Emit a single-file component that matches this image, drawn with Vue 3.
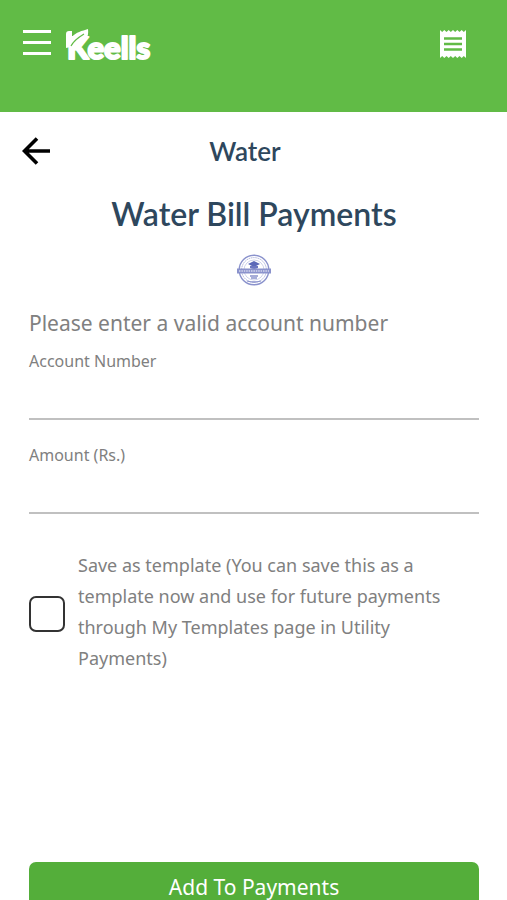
<template>
  <div class="page">
    <!-- Top bar -->
    <header class="topbar">
      <div class="topbar-left">
        <button class="icon-btn" type="button" aria-label="Menu">
          <svg width="28" height="26" viewBox="0 0 28 26" fill="#fff">
            <rect width="28" height="3" />
            <rect y="11" width="28" height="3" />
            <rect y="22" width="28" height="3" />
          </svg>
        </button>
        <a class="logo" href="#" aria-label="Keells">
          <svg width="96" height="40" viewBox="0 0 96 40">
            <text class="logo-text" x="1" y="31">Keells</text>
            <path
              d="M0 20V6q0-3 3-3h3v6C10 4 16 3 22 1C23 9 20 16 9 18z"
              fill="#fff"
            />
            <path d="M5 18C8 12 13 9 18 6" fill="none" stroke="#61bb46" stroke-width="1.200" />
          </svg>
        </a>
      </div>
      <button class="icon-btn" type="button" aria-label="Bills">
        <svg width="26" height="28" viewBox="0 0 26 28">
          <path
            d="M0 0l2.200 2 2.100-2 2.200 2 2.200-2 2.100 2L13 0l2.200 2 2.100-2 2.200 2 2.200-2 2.100 2L26 0v28l-2.200-2-2.100 2-2.200-2-2.200 2-2.100-2L13 28l-2.200-2-2.100 2-2.200-2-2.200 2-2.100-2L0 28z"
            fill="#fff"
          />
          <path d="M4 8.500h18M4 14h18M4 19.500h18" stroke="#61bb46" stroke-width="2.600" />
        </svg>
      </button>
    </header>

    <main class="content">
      <!-- Title row -->
      <div class="title-row">
        <button class="icon-btn back" type="button" aria-label="Back">
          <svg width="30" height="28" viewBox="0 0 30 28" fill="none" stroke="#000" stroke-width="3.600">
            <path d="M28 14H3M15 1.500L2.500 14L15 26.500" />
          </svg>
        </button>
        <h2>Water</h2>
      </div>

      <h1>Water Bill Payments</h1>

      <svg class="biller" width="36" height="32" viewBox="0 0 36 32" fill="none" stroke="#8a92cc">
        <circle cx="18" cy="16" r="14.800" stroke-width="1.400" />
        <circle cx="18" cy="16" r="12.400" stroke-width="1" stroke-dasharray="1.500 .7" opacity=".7" />
        <circle cx="18" cy="16" r="10" stroke-width=".7" opacity=".6" />
        <path d="M12 10l6-3 6 3-6 3z" fill="#5b68b8" stroke="none" />
        <path d="M14 12v2q4 2 8 0v-2" fill="#6b76c0" stroke="none" />
        <rect x="1" y="14.500" width="34" height="5" fill="#8a92cc" stroke="none" />
        <path d="M3 17h30" stroke="#d5d8ee" stroke-width="1.600" stroke-dasharray="1.500 .9" />
        <path d="M14 22h8M15 24h6M11 27q7 2 14 0" stroke-width="1.300" />
      </svg>

      <form class="form" @submit.prevent>
        <p class="hint">Please enter a valid account number</p>

        <div v-for="f in fields" :key="f.id" class="field">
          <label :for="f.id">{{ f.label }}</label>
          <input :id="f.id" v-model="f.value" type="text" inputmode="numeric" />
        </div>

        <div class="save">
          <input id="save-template" v-model="saveTemplate" type="checkbox" />
          <label for="save-template">
            Save as template (You can save this as a template now and use for future payments
            through My Templates page in Utility Payments)
          </label>
        </div>

        <button class="submit" type="submit">Add To Payments</button>
      </form>
    </main>
  </div>
</template>

<script setup>
import { ref } from 'vue'

const fields = ref([
  { id: 'account', label: 'Account Number', value: '' },
  { id: 'amount', label: 'Amount (Rs.)', value: '' },
])
const saveTemplate = ref(false)
</script>

<style>
body {
  margin: 0;
  background: #fff;
}
html,
body,
#app {
  height: 100%;
}
</style>

<style scoped>
.page {
  height: 100%;
  overflow: hidden;
  font-family: 'Noto Sans', 'Open Sans', sans-serif;
  color: #808080;
}

/* Top bar */
.topbar {
  display: flex;
  align-items: flex-start;
  justify-content: space-between;
  box-sizing: border-box;
  height: 112px;
  padding: 28px 41px 0 23px;
  background: #61bb46;
}
.topbar-left { display: flex; align-items: flex-start; gap: 15px; }
.icon-btn {
  display: block;
  padding: 2px 0;
  border: none;
  background: transparent;
  cursor: pointer;
}
.icon-btn svg,
.logo svg { display: block; }
.logo-text {
  font-family: Lato, sans-serif;
  font-size: 31px;
  font-weight: 900;
  fill: #fff;
  stroke: #fff;
  stroke-width: 2px;
  stroke-linejoin: round;
}

/* Titles */
.content { padding: 20px 28px 0 29px; }
.title-row {
  display: grid;
  grid-template-columns: 32px 1fr 50px;
  align-items: center;
  margin: 0 -7px;
}
h1,
h2 {
  margin: 0;
  font-family: Lato, sans-serif;
  font-weight: 600;
  color: #2e475d;
  text-align: center;
}
h2 { font-size: 26px; line-height: 38px; }
h1 { margin-top: 24px; font-size: 32px; line-height: 40px; }
.biller { display: block; margin: 20px auto 0; }

/* Form */
.hint { margin: 20px 0 9px; font-size: 21px; line-height: 34px; }
.field { margin-bottom: 23px; }
.field label { display: block; font-size: 16px; line-height: 24px; }
.field input {
  display: block;
  box-sizing: border-box;
  width: 100%;
  height: 47px;
  padding: 0;
  border: none;
  border-bottom: 2px solid #c0c0c0;
  border-radius: 0;
  background: transparent;
  font: inherit;
  font-size: 20px;
  outline: none;
}
.save {
  display: flex;
  align-items: center;
  gap: 13px;
  margin-top: 36px;
}
.save input {
  flex-shrink: 0;
  width: 36px;
  height: 36px;
  margin: 4px 0 0;
  border: 2px solid #333;
  border-radius: 7px;
  appearance: none;
  background: #fff;
}
.save input:checked { background: #54ae3a; }
.save label { font-size: 18px; line-height: 31px; }
.submit {
  display: block;
  width: 100%;
  height: 50px;
  margin-top: 188px;
  border: none;
  border-radius: 7px;
  background: #54ae3a;
  color: #fff;
  font: inherit;
  font-size: 21px;
  cursor: pointer;
}
</style>
